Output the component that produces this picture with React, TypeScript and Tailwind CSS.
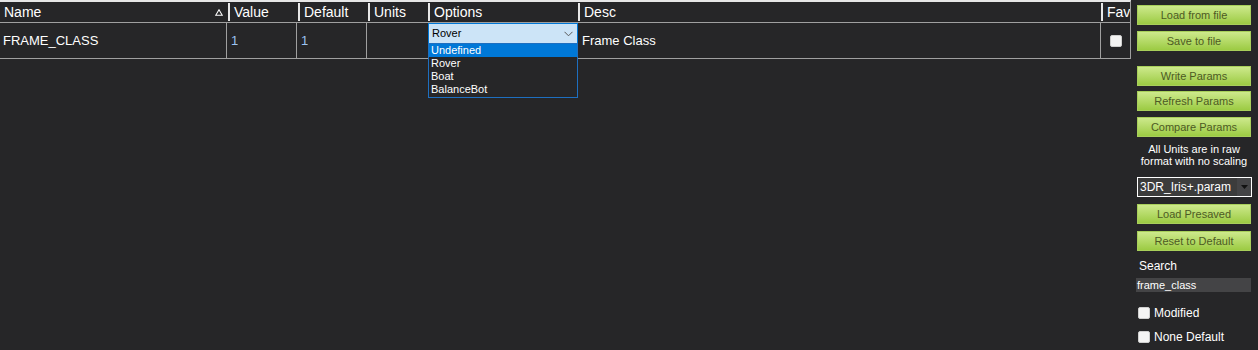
import React from "react";

const font = { fontFamily: '"Liberation Sans", Arial, sans-serif' };

function HeaderCell({ w, label, first, sort }: { w: string; label: string; first?: boolean; sort?: boolean }) {
  return (
    <div className={`${w} relative flex h-full items-center shrink-0`}>
      {!first && <div className="h-[18px] w-[2px] bg-[#e8e8e8] shrink-0" />}
      <span className="pl-[4px] text-[14px] text-white leading-none">{label}</span>
      {sort && (
        <svg className="absolute right-[5px] top-[7px]" width="8" height="7" viewBox="0 0 8 7">
          <path d="M4 0.8 L7.3 6.3 L0.7 6.3 Z" fill="none" stroke="#ffffff" strokeWidth="1.1" />
        </svg>
      )}
    </div>
  );
}

function GreenButton({ label, className }: { label: string; className?: string }) {
  return (
    <div
      className={`h-[20px] w-[114px] flex items-center justify-center border border-[#a8cf5a] bg-[linear-gradient(to_bottom,#cde98c,#9ccb43)] text-[11px] text-[#4d5a24] leading-none ${className ?? ""}`}
    >
      {label}
    </div>
  );
}

function CheckBox({ className }: { className?: string }) {
  return <div className={`h-[12px] w-[12px] rounded-[2px] bg-[#f4f4f4] border border-[#cfcfcf] ${className ?? ""}`} />;
}

export default function App() {
  return (
    <div className="w-[1258px] h-[350px] bg-[#262628] flex overflow-hidden" style={font}>
      {/* Table */}
      <div className="w-[1131px] shrink-0 flex flex-col">
        {/* Header */}
        <div className="h-[23px] border-t-2 border-t-[#e6e6e6] border-b border-b-[#a0a0a0] border-r border-r-[#a0a0a0] flex items-center">
          <HeaderCell w="w-[228px]" label="Name" first sort />
          <HeaderCell w="w-[70px]" label="Value" />
          <HeaderCell w="w-[70px]" label="Default" />
          <HeaderCell w="w-[60px]" label="Units" />
          <HeaderCell w="w-[150px]" label="Options" />
          <HeaderCell w="w-[523px]" label="Desc" />
          <div className="flex-1 h-full flex items-center overflow-hidden">
            <div className="h-[18px] w-[2px] bg-[#e8e8e8] shrink-0" />
            <span className="pl-[4px] text-[14px] text-white leading-none whitespace-nowrap">Fav</span>
          </div>
        </div>
        {/* Data row */}
        <div className="h-[36px] border-b border-b-[#a0a0a0] border-r border-r-[#a0a0a0] flex text-[13px] text-white">
          <div className="w-[227px] shrink-0 border-r border-r-[#a0a0a0] flex items-center pl-[3px]">FRAME_CLASS</div>
          <div className="w-[70px] shrink-0 border-r border-r-[#a0a0a0] flex items-center pl-[4px] text-[#9cc3f2]">1</div>
          <div className="w-[70px] shrink-0 border-r border-r-[#a0a0a0] flex items-center pl-[4px] text-[#9cc3f2]">1</div>
          <div className="w-[61px] shrink-0" />
          <div className="w-[150px] shrink-0 relative">
            <div className="h-[21px] w-[150px] bg-[#cce4f7] border border-[#0078d7] flex items-center justify-between pl-[3px] pr-[4px] text-[11px] text-black">
              <span>Rover</span>
              <svg width="9" height="6" viewBox="0 0 9 6">
                <path d="M0.5 0.8 L4.5 4.8 L8.5 0.8" fill="none" stroke="#5a5a5a" strokeWidth="1" />
              </svg>
            </div>
            <div className="absolute left-0 top-[20px] w-[150px] h-[55px] border border-[#1e6fc0] bg-[#262628] text-[11px] text-white leading-[13px] z-10">
              <div className="h-[13px] bg-[#0078d7] pl-[2px]">Undefined</div>
              <div className="h-[13px] pl-[2px]">Rover</div>
              <div className="h-[13px] pl-[2px]">Boat</div>
              <div className="h-[13px] pl-[2px]">BalanceBot</div>
            </div>
          </div>
          <div className="w-[523px] shrink-0 border-r border-r-[#a0a0a0] flex items-center pl-[4px]">Frame Class</div>
          <div className="flex-1 flex items-center justify-center pl-[1px]">
            <CheckBox />
          </div>
        </div>
      </div>

      {/* Right panel */}
      <div className="flex-1 flex flex-col pl-[6px] text-white">
        <GreenButton label="Load from file" className="mt-[5px]" />
        <GreenButton label="Save to file" className="mt-[6px]" />
        <GreenButton label="Write Params" className="mt-[15px]" />
        <GreenButton label="Refresh Params" className="mt-[5px]" />
        <GreenButton label="Compare Params" className="mt-[6px]" />
        <div className="mt-[6px] w-[114px] text-center text-[11px] leading-[12px]">
          All Units are in raw
          <br />
          format with no scaling
        </div>
        <div className="mt-[10px] h-[20px] w-[115px] border border-white bg-[#3c3c3c] flex items-center">
          <span className="flex-1 pl-[2px] text-[12px] leading-none">3DR_Iris+.param</span>
          <div className="w-[14px] h-full flex items-center justify-center bg-[#444446]">
            <svg width="7" height="4" viewBox="0 0 7 4">
              <path d="M0 0 L7 0 L3.5 4 Z" fill="#111" />
            </svg>
          </div>
        </div>
        <GreenButton label="Load Presaved" className="mt-[7px]" />
        <GreenButton label="Reset to Default" className="mt-[7px]" />
        <div className="mt-[8px] pl-[2px] text-[12px] leading-[14px]">Search</div>
        <div className="mt-[5px] -ml-[1px] h-[14px] w-[115px] bg-[#444446] text-[11px] leading-[14px] pl-[1px]">frame_class</div>
        <div className="mt-[15px] flex items-center gap-[4px] pl-[1px]">
          <CheckBox />
          <span className="text-[12px] leading-none">Modified</span>
        </div>
        <div className="mt-[12px] flex items-center gap-[4px] pl-[1px]">
          <CheckBox />
          <span className="text-[12px] leading-none">None Default</span>
        </div>
      </div>
    </div>
  );
}
